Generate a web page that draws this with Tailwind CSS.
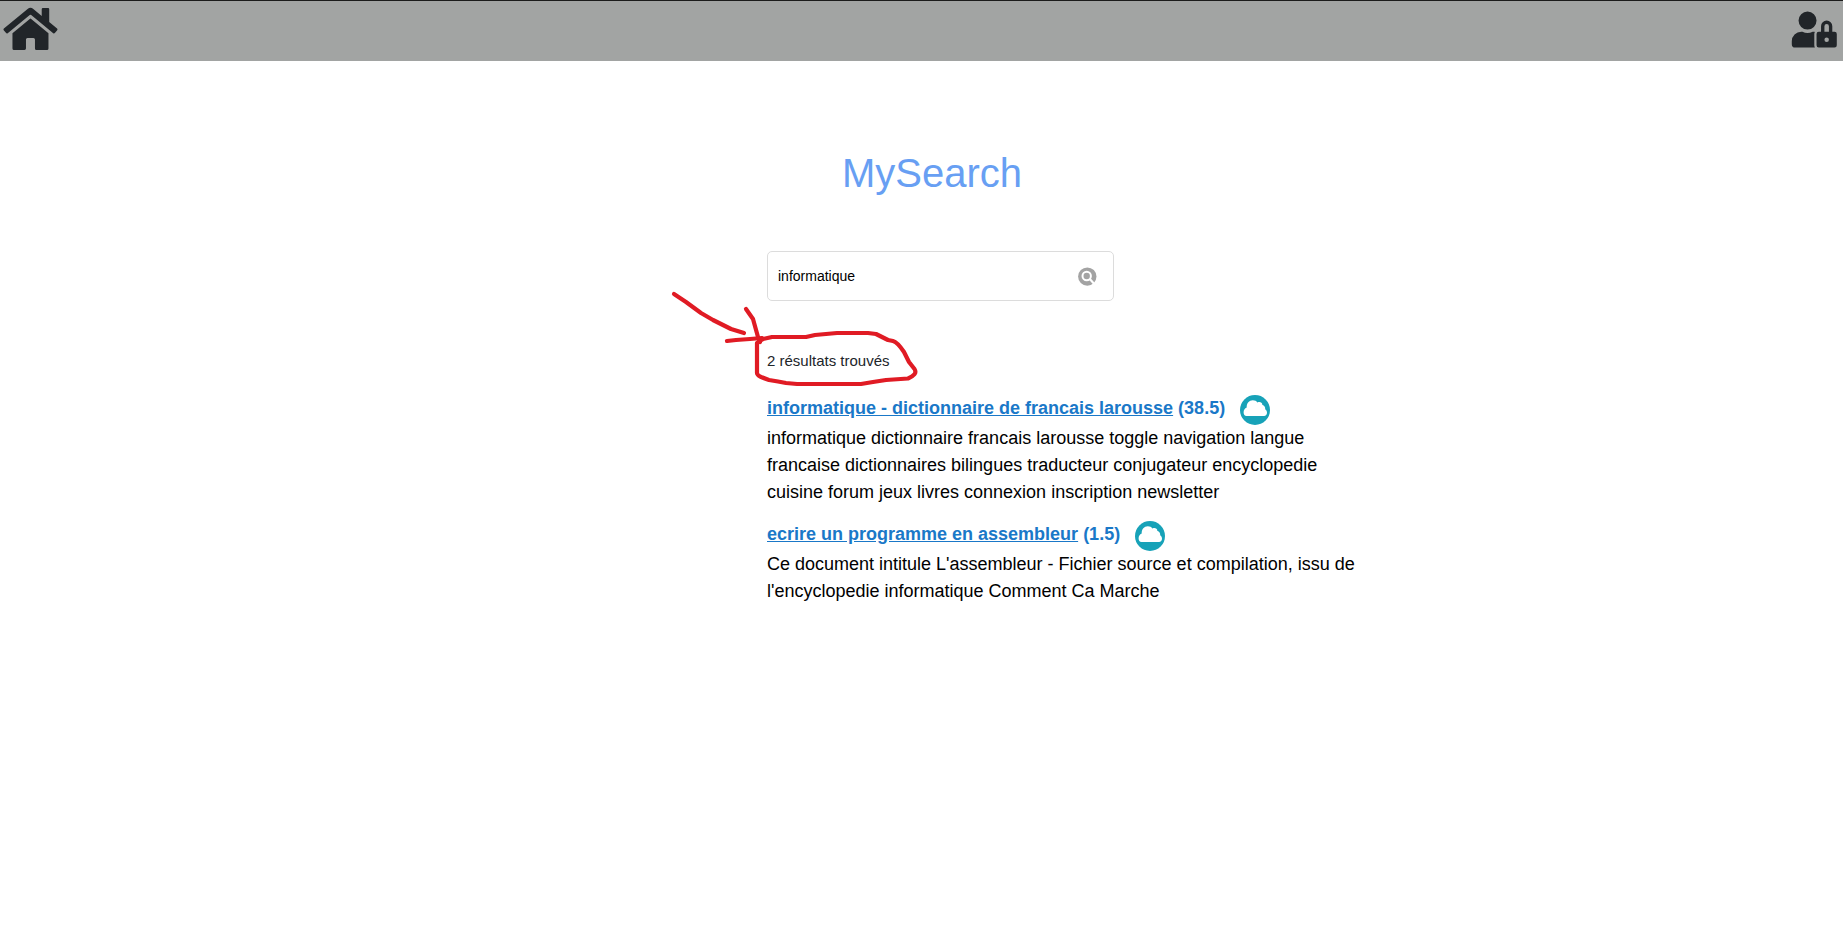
<!DOCTYPE html>
<html lang="fr">
<head>
<meta charset="utf-8">
<title>MySearch</title>
<script src="https://cdn.jsdelivr.net/npm/@tailwindcss/browser@4"></script>
</head>
<body class="relative h-[938px] overflow-hidden bg-white font-['Liberation_Sans',Arial,sans-serif] text-[#212529]">
  <svg class="hidden">
    <symbol id="cloud" viewBox="0 0 30 30">
      <circle cx="15" cy="15" r="15" fill="#17a2b8"/>
      <path fill="#fff" d="M6.500 21C4.600 21 3.600 19.400 3.600 17.500C3.600 15.300 4.700 13.400 6.700 12.600C6.500 8.200 9.200 5.300 12.800 5.300C14.900 5.300 16.500 6.100 17.400 7.500C18.800 6.900 20.400 6.900 21.400 7.700C22.200 8.400 22.400 9 22.200 9.700C24.400 10.300 25.400 12.200 25.200 14.200C26.400 15 27 16.300 27 17.800C27 19.700 25.800 21 24 21Z"/>
    </symbol>
  </svg>

  <header class="flex h-[61px] items-start justify-between border-t border-[#1b1b1b] bg-[#a2a4a3] pl-[3px] pr-1.5 pt-1">
    <a href="#" aria-label="Accueil">
      <svg class="h-12 w-[54px] overflow-visible fill-[#212529]" viewBox="-5 0 576 512"><path d="M280.370 148.260L96 300.110V464a16 16 0 0 0 16 16l112.060-.29a16 16 0 0 0 15.920-16V368a16 16 0 0 1 16-16h64a16 16 0 0 1 16 16v95.640a16 16 0 0 0 16 16.050L464 480a16 16 0 0 0 16-16V300L295.670 148.260a12.190 12.190 0 0 0-15.300 0zM571.600 251.470L488 182.560V44.050a12 12 0 0 0-12-12h-56a12 12 0 0 0-12 12v72.610L318.470 43a48 48 0 0 0-61 0L4.340 251.470a12 12 0 0 0-1.600 16.900l25.500 31A12 12 0 0 0 45.150 301l235.220-193.740a12.190 12.190 0 0 1 15.300 0L530.900 301a12 12 0 0 0 16.900-1.600l25.500-31a12 12 0 0 0-1.700-16.930z"/></svg>
    </a>
    <a href="#" aria-label="Connexion" class="pt-[7px]">
      <svg class="h-9 w-[45px] overflow-visible fill-[#212529]" viewBox="3 6 640 512"><path d="M224 256A128 128 0 1 0 96 128a128 128 0 0 0 128 128zm96 64a63.080 63.080 0 0 1 8.100-30.500c-4.800-.5-9.500-1.500-14.500-1.500h-16.700a174.080 174.080 0 0 1-145.800 0h-16.700A134.430 134.430 0 0 0 0 422.400V464a48 48 0 0 0 48 48h280.900a63.540 63.540 0 0 1-8.900-32zm288-32h-32v-80a80 80 0 0 0-160 0v80h-32a32 32 0 0 0-32 32v160a32 32 0 0 0 32 32h224a32 32 0 0 0 32-32V320a32 32 0 0 0-32-32zM496 432a32 32 0 1 1 32-32 32 32 0 0 1-32 32zm32-144h-64v-80a32 32 0 0 1 64 0z"/></svg>
    </a>
  </header>

  <main class="ml-[767px] w-[600px] pt-[88px]">
    <h1 class="ml-[75px] text-[40px] leading-12 text-[#689ff3]">MySearch</h1>

    <form class="mt-[54px] flex h-[50px] w-[347px] items-center justify-between rounded-[5px] border border-[#dcdcdc] pl-[10px] pr-4">
      <input class="w-60 text-sm text-black outline-none" type="text" value="informatique" aria-label="Recherche">
      <button type="button" aria-label="Rechercher">
        <svg class="size-[19px]" viewBox="0 0 19 19" fill="none">
          <circle cx="9.300" cy="9.600" r="9.200" fill="#a3a3a3"/>
          <circle cx="8.700" cy="9" r="4.200" stroke="#fff" stroke-width="2"/>
          <path d="M11.800 12L16.500 17.200" stroke="#fff" stroke-width="2.200"/>
        </svg>
      </button>
    </form>

    <p class="mt-[49px] text-[15px] leading-[22px]">2 résultats trouvés</p>

    <section class="mt-[23px] flex flex-col gap-[15px] text-lg leading-[27px] text-black">
      <article>
        <div class="flex h-[30px] items-start gap-[15px] font-bold text-[#1a78c8]">
          <h2><a href="#" class="underline">informatique - dictionnaire de francais larousse</a> (38.5)</h2>
          <svg class="size-[30px] shrink-0"><use href="#cloud"/></svg>
        </div>
        <p>informatique dictionnaire francais larousse toggle navigation langue<br>francaise dictionnaires bilingues traducteur conjugateur encyclopedie<br>cuisine forum jeux livres connexion inscription newsletter</p>
      </article>
      <article>
        <div class="flex h-[30px] items-start gap-[15px] font-bold text-[#1a78c8]">
          <h2><a href="#" class="underline">ecrire un programme en assembleur</a> (1.5)</h2>
          <svg class="size-[30px] shrink-0"><use href="#cloud"/></svg>
        </div>
        <p>Ce document intitule L'assembleur - Fichier source et compilation, issu de<br>l'encyclopedie informatique Comment Ca Marche</p>
      </article>
    </section>
  </main>

  <!-- Hand-drawn arrow and loop around the result count -->
  <svg class="pointer-events-none absolute left-[660px] top-[280px] h-[115px] w-[270px]" viewBox="660 280 270 115" fill="none" stroke="#e01b24" stroke-width="4.200" stroke-linecap="round" stroke-linejoin="round">
    <path d="M674 294L686 302L701 313L713 320L731 329L744 333"/>
    <path d="M746 309L753 319L758 337L760 342"/>
    <path d="M727 341L736 340L750 339L762 338"/>
    <path d="M757 343V373C757 376 763 378 769 380L778 381.500L786 383L797 384H861L873 382L886 380L908 378.500C914 376 917 373 914.500 369L909 362L904 352C900 346 897 342 893 341L888 340L876 334L868 333H837L815 335L806 337H772L763 339L757 343Z"/>
  </svg>
</body>
</html>
